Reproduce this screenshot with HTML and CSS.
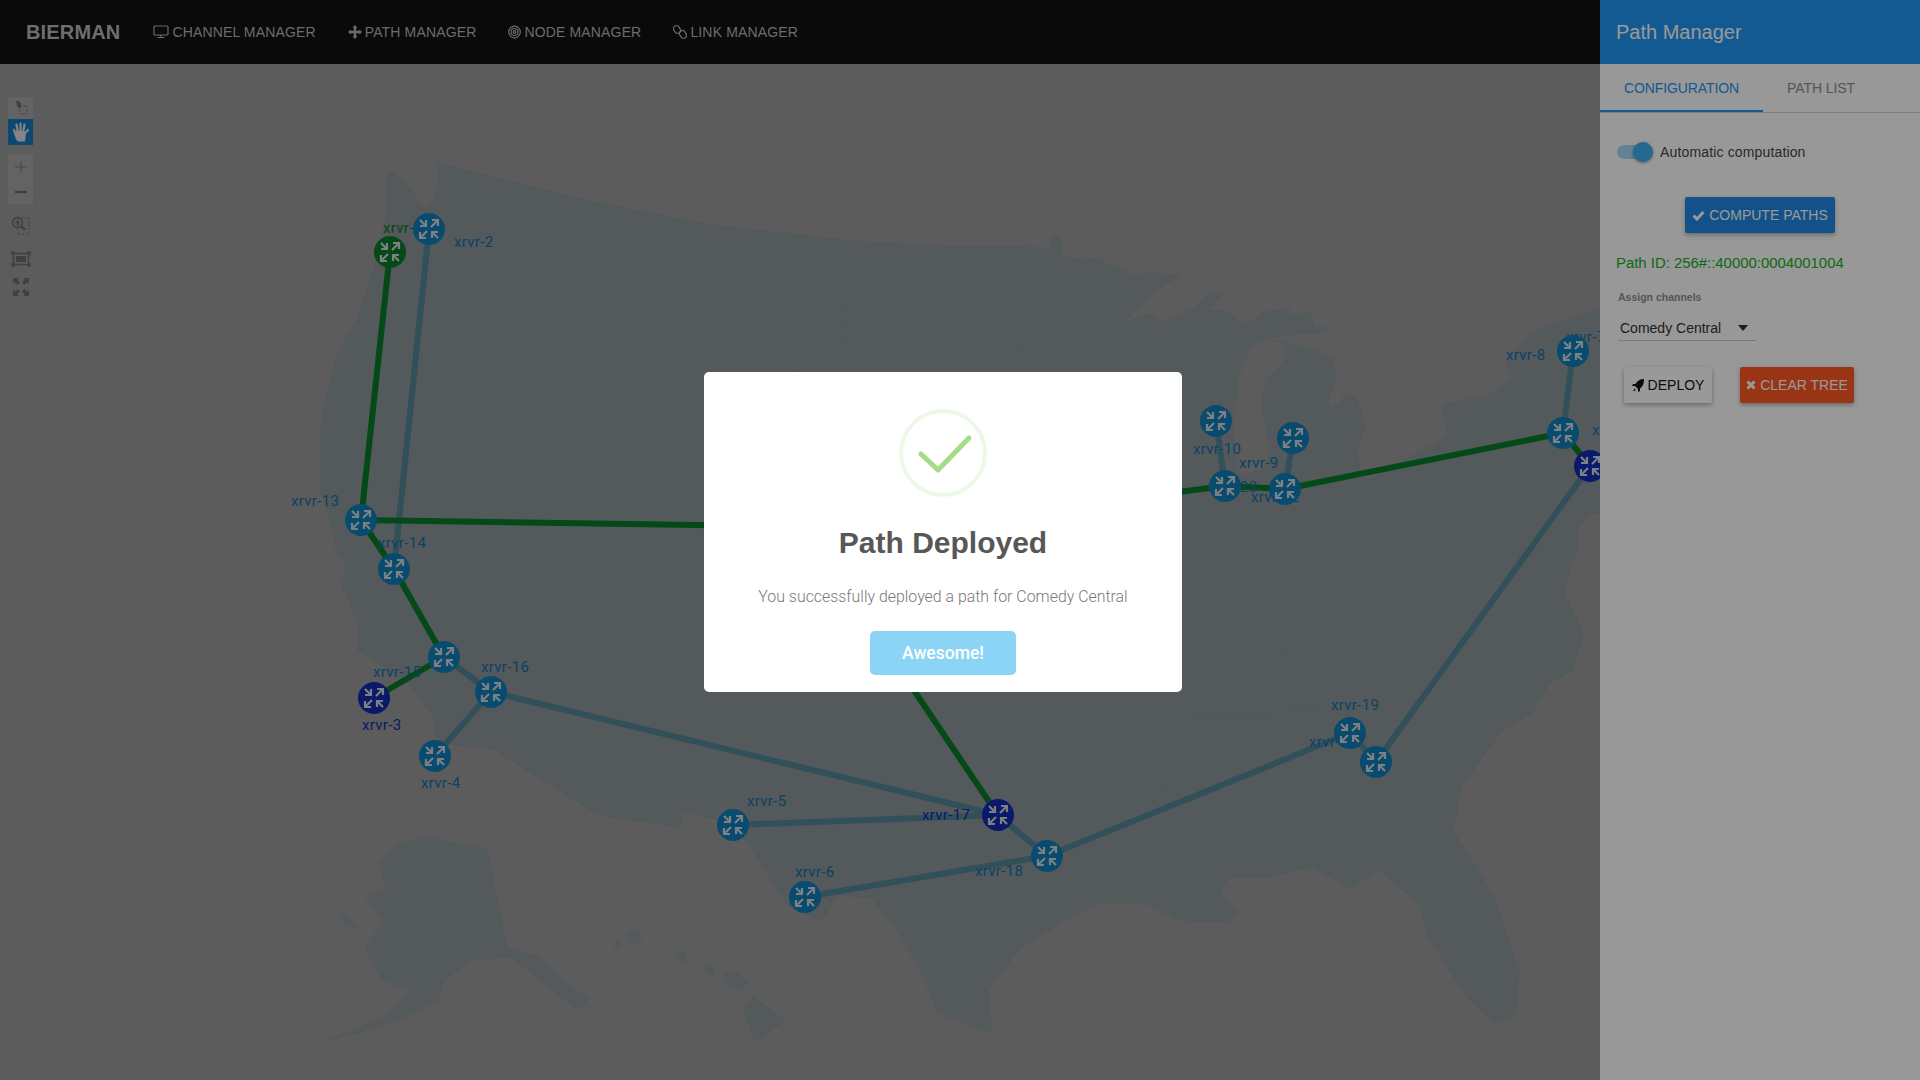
FILE: index.html
```html
<!DOCTYPE html>
<html><head>
<meta charset="utf-8"><title>Bierman</title>
<link rel="stylesheet" href="styles.css">
</head>
<body>
<div id="app">
<div id="main">
<div id="navbar">
<span class="brand">BIERMAN</span>
<a class="navitem"><svg class="navicon" width="16" height="14" viewBox="0 0 16 14"><rect x="1" y="1" width="14" height="9" rx="1"/><path d="M8 10v2M4.500 12.500h7"/></svg>CHANNEL MANAGER</a>
<a class="navitem"><svg class="navicon solid" width="14" height="16" viewBox="0 0 14 14"><path d="M7 0l2.600 2.800H8.200V5.800h3V4.400L14 7l-2.800 2.600V8.200h-3v3h1.400L7 14l-2.600-2.800h1.400v-3h-3v1.400L0 7l2.800-2.600v1.400h3v-3H4.400z"/></svg>PATH MANAGER</a>
<a class="navitem"><svg class="navicon" width="13" height="14" viewBox="0 0 13 14"><circle cx="6.500" cy="7" r="5.800"/><circle cx="6.500" cy="7" r="3.500"/><circle cx="6.500" cy="7" r="1.300"/></svg>NODE MANAGER</a>
<a class="navitem"><svg class="navicon" width="14" height="16" viewBox="0 0 14 16"><rect x="1" y="1.500" width="6" height="8" rx="3" transform="rotate(-30 4 5.500)"/><rect x="7" y="6.500" width="6" height="8" rx="3" transform="rotate(-30 10 10.500)"/></svg>LINK MANAGER</a>
</div>
<div id="map">
<svg id="topology" width="1600" height="1016" viewBox="0 64 1600 1016">
<defs>
<symbol id="router" viewBox="-16 -16 32 32" overflow="visible">
<g class="arrows">
<path d="M-9-9L-3-3M-9-3H-3V-9"/>
<path d="M2-2L9-9M3-9H9V-3"/>
<path d="M-2 2L-9 9M-9 3V9H-3"/>
<path d="M9 9L3 3M3 9V3H9"/>
</g>
</symbol>
</defs>

<g class="land">
<path d="M437 163L584 200L710 225L851 241L956 247L1051 248L1052 235L1059 237L1063 257L1082 260L1096 258L1110 265L1121 270L1135 277L1149 272L1179 276L1153 292L1125 322L1153 313L1160 323L1191 310L1212 292L1223 293L1209 310L1230 313L1237 322L1254 322L1261 313L1289 308L1289 315L1310 313L1314 327L1327 328L1325 333L1300 333L1272 337L1251 345L1238 377L1235 407L1233 447L1240 477L1267 467L1270 447L1262 403L1267 380L1283 363L1287 347L1278 340L1313 350L1333 360L1337 377L1327 403L1333 410L1347 393L1357 400L1365 427L1357 447L1360 477L1370 480L1410 457L1437 443L1447 435L1443 405L1490 395L1510 380L1507 363L1530 333L1567 320L1600 310V513L1590 513L1577 530L1577 547L1563 593L1583 633L1573 670L1550 683L1532 713L1502 730L1461 787L1453 830L1494 897L1519 973L1515 1013L1494 1023L1469 1000L1428 937L1419 903L1378 870L1351 888L1312 867L1270 877L1229 877L1220 890L1237 913L1229 922L1179 920L1146 903L1104 902L1071 917L1021 947L988 990L992 1033L938 1013L922 973L897 930L872 898L839 895L821 921L789 907L748 843L719 820L683 812L681 827L599 815L499 753L503 750L443 743L435 733L433 717L412 687L358 650L360 627L340 580L347 567L337 553L330 520L320 487L320 428L337 355L357 320L380 250L387 213L387 180L390 172L400 178L415 195L425 210L433 200L440 173Z"/>
<path d="M424 837L487 850L507 947L540 957L574 990L590 997L578 1010L540 980L511 957L470 960L445 980L437 1000L391 1023L325 1042L383 1017L412 990L383 980L366 950L383 920L366 897L387 887L379 863L395 847Z"/>
<path d="M752 997L785 1020L756 1042L744 1010Z"/>
<path d="M723 973L736 972L748 983L740 990L726 984Z"/>
<path d="M703 962L712 966L714 975L706 972Z"/>
<path d="M678 950L686 955L683 962L676 958Z"/>
<circle cx="634" cy="937" r="7"/>
<path d="M615 950L618 938L620 948Z"/>
<path d="M340 912L350 918L356 928L346 926Z"/>
</g>
<path class="states" d="M563 195L542 290M584 200L577 237L605 287L595 323L612 320L626 363L668 367L675 355L805 372M851 241L842 343L1018 351M842 343L840 377M1005 248L1012 300L1018 351L1012 370M500 285L542 295L549 310L528 343L521 380M673 690L659 817M839 690L831 817M922 737L963 753L1088 772L1088 857M1088 790H1169L1158 857L1212 855L1212 873M1249 713L1254 857M1191 720L1336 708M1191 720L1166 790M1345 747L1349 840M1278 850L1349 840L1444 845M1075 690L1075 767M1430 530L1553 507M1423 480L1430 530M1313 487L1323 567M1247 500L1253 583L1243 617M1323 567L1353 578L1373 575L1383 587L1403 617L1423 617L1447 605L1460 567L1487 537M1383 580L1400 553L1420 537L1430 530M1213 667L1247 658L1413 640L1568 613M1213 647L1243 617L1283 607L1307 583L1323 567M1193 718L1320 708M1380 703L1413 690L1440 687L1473 693L1517 717M1320 710L1337 777M1407 733L1460 777"/>

<g class="links">
<line x1="429" y1="229" x2="394" y2="569"/>
<line x1="444" y1="657" x2="491" y2="692"/>
<line x1="491" y1="692" x2="435" y2="756"/>
<line x1="491" y1="692" x2="998" y2="815"/>
<line x1="733" y1="825" x2="998" y2="815"/>
<line x1="998" y1="815" x2="1047" y2="856"/>
<line x1="805" y1="897" x2="1047" y2="856"/>
<line x1="1047" y1="856" x2="1350" y2="733"/>
<line x1="1350" y1="733" x2="1376" y2="762"/>
<line x1="1376" y1="762" x2="1590" y2="466"/>
<line x1="1216" y1="421" x2="1225" y2="486"/>
<line x1="1293" y1="438" x2="1285" y2="489"/>
<line x1="1573" y1="351" x2="1563" y2="433"/>
</g>
<g class="links path">
<line x1="390" y1="252" x2="361" y2="520"/>
<line x1="361" y1="520" x2="394" y2="569"/>
<line x1="394" y1="569" x2="444" y2="657"/>
<line x1="444" y1="657" x2="374" y2="698"/>
<line x1="361" y1="520" x2="900" y2="528"/>
<line x1="880" y1="640" x2="998" y2="815"/>
<line x1="1100" y1="502" x2="1225" y2="486"/>
<line x1="1225" y1="486" x2="1285" y2="489"/>
<line x1="1285" y1="489" x2="1563" y2="433"/>
<line x1="1563" y1="433" x2="1590" y2="466"/>
</g>

<g class="labels">
<text class="green" x="383" y="233">xrvr-1</text>
<text x="454" y="247">xrvr-2</text>
<text class="navy" x="362" y="730">xrvr-3</text>
<text x="421" y="788">xrvr-4</text>
<text x="747" y="806">xrvr-5</text>
<text x="795" y="877">xrvr-6</text>
<text x="1566" y="342">xrvr-7</text>
<text x="1506" y="360">xrvr-8</text>
<text x="1239" y="468">xrvr-9</text>
<text x="1193" y="454">xrvr-10</text>
<text x="1251" y="502">xrvr-12</text>
<text x="291" y="506">xrvr-13</text>
<text x="378" y="548">xrvr-14</text>
<text x="373" y="677">xrvr-15</text>
<text x="481" y="672">xrvr-16</text>
<text class="navy" x="922" y="820">xrvr-17</text>
<text x="975" y="876">xrvr-18</text>
<text x="1331" y="710">xrvr-19</text>
<text x="1309" y="747">xrvr-20</text>
<text x="1592" y="435">xrvr-22</text>
<text x="1209" y="492">xrvr-23</text>
</g>

<g class="nodes">
<circle class="green" cx="390" cy="252" r="16"/><use href="#router" x="374" y="236" width="32" height="32"/>
<circle cx="429" cy="229" r="16"/><use href="#router" x="413" y="213" width="32" height="32"/>
<circle cx="361" cy="520" r="16"/><use href="#router" x="345" y="504" width="32" height="32"/>
<circle cx="394" cy="569" r="16"/><use href="#router" x="378" y="553" width="32" height="32"/>
<circle cx="444" cy="657" r="16"/><use href="#router" x="428" y="641" width="32" height="32"/>
<circle cx="491" cy="692" r="16"/><use href="#router" x="475" y="676" width="32" height="32"/>
<circle class="navy" cx="374" cy="698" r="16"/><use href="#router" x="358" y="682" width="32" height="32"/>
<circle cx="435" cy="756" r="16"/><use href="#router" x="419" y="740" width="32" height="32"/>
<circle cx="733" cy="825" r="16"/><use href="#router" x="717" y="809" width="32" height="32"/>
<circle cx="805" cy="897" r="16"/><use href="#router" x="789" y="881" width="32" height="32"/>
<circle class="navy" cx="998" cy="815" r="16"/><use href="#router" x="982" y="799" width="32" height="32"/>
<circle cx="1047" cy="856" r="16"/><use href="#router" x="1031" y="840" width="32" height="32"/>
<circle cx="1350" cy="733" r="16"/><use href="#router" x="1334" y="717" width="32" height="32"/>
<circle cx="1376" cy="762" r="16"/><use href="#router" x="1360" y="746" width="32" height="32"/>
<circle cx="1216" cy="421" r="16"/><use href="#router" x="1200" y="405" width="32" height="32"/>
<circle cx="1293" cy="438" r="16"/><use href="#router" x="1277" y="422" width="32" height="32"/>
<circle cx="1225" cy="486" r="16"/><use href="#router" x="1209" y="470" width="32" height="32"/>
<circle cx="1285" cy="489" r="16"/><use href="#router" x="1269" y="473" width="32" height="32"/>
<circle cx="1563" cy="433" r="16"/><use href="#router" x="1547" y="417" width="32" height="32"/>
<circle cx="1573" cy="351" r="16"/><use href="#router" x="1557" y="335" width="32" height="32"/>
<circle class="navy" cx="1590" cy="466" r="16"/><use href="#router" x="1574" y="450" width="32" height="32"/>
</g>
</svg>

<div id="toolbar">
<div class="toolgroup">
<div class="toolbtn select"><svg width="16" height="16" viewBox="0 0 16 16"><path class="fill" d="M3 1l3 0 2 3 0 2-1 1 0 2-3-3z"/><rect class="dash" x="7" y="6" width="7" height="8"/></svg></div>
<div class="toolbtn hand active"><svg width="18" height="22" viewBox="0 0 18 22"><path d="M5 18L2 9M6 12L4.500 3.500M8.500 11V2.500M11 11.500L12.500 3.500M11.500 13.500L16 9"/><path class="palm" d="M3 10L12 10L14 12L13 20.500H5.500z"/></svg></div>
</div>
<div class="toolgroup zoom">
<div class="toolbtn"><svg width="14" height="14" viewBox="0 0 14 14"><path class="thin" d="M7 1v12M1 7h12"/></svg></div>
<div class="toolbtn"><svg width="14" height="14" viewBox="0 0 14 14"><path class="thick" d="M1 7h12"/></svg></div>
</div>
<div class="toolicon"><svg width="20" height="20" viewBox="0 0 20 20"><circle class="line" cx="6.500" cy="6.500" r="5"/><path class="line" d="M6.500 4v5M4 6.500h5"/><path class="thick" d="M10 10l4 4"/><rect class="dash" x="7" y="2" width="11" height="16"/></svg></div>
<div class="toolicon fit"><svg width="20" height="16" viewBox="0 0 20 16"><rect class="fill" x="5" y="5" width="10" height="6"/><rect class="line" x="2.500" y="2.500" width="15" height="11"/><path class="line" d="M1 4V1h3M16 1h3v3M1 12v3h3M16 15h3v-3"/></svg></div>
<div class="toolicon full"><svg width="18" height="20" viewBox="0 0 18 20"><path class="fill" d="M1 1h6L5.200 2.800 8 5.600 5.600 8 2.800 5.200 1 7zM17 1h-6l1.800 1.800L10 5.600 12.400 8l2.800-2.800L17 7zM1 19h6l-1.800-1.800L8 14.400 5.600 12l-2.800 2.800L1 13zM17 19h-6l1.800-1.800L10 14.400 12.400 12l2.800 2.800L17 13z"/></svg></div>
</div>
</div>
</div>

<div id="panel">
<div class="paneltitle">Path Manager</div>
<div class="tabs">
<div class="tab active">CONFIGURATION</div>
<div class="tab">PATH LIST</div>
</div>
<div class="panelbody">
<div class="togglerow"><span class="toggle"><span class="thumb"></span></span>Automatic computation</div>
<div class="computerow">
<button class="btn primary"><svg class="btnicon" width="13" height="11" viewBox="0 0 13 11"><path d="M1.500 5.500l3.500 3.500 6.500-7" /></svg>COMPUTE PATHS</button>
</div>
<div class="pathid">Path ID: 256#::40000:0004001004</div>
<div class="fieldlabel">Assign channels</div>
<div class="selectbox">Comedy Central<span class="caret"></span></div>
<div class="actions">
<button class="btn plain"><svg width="12" height="13" viewBox="0 0 12 13"><path class="rocket" d="M12 0C8 0 5 2 3.500 5H1L0 7h3l3 3v3l2-1V9.500C10.500 8 12 4.500 12 0zM2.500 9.500L1 12.500 4 11z"/></svg>DEPLOY</button>
<button class="btn danger"><svg class="btnicon" width="10" height="10" viewBox="0 0 10 10"><path d="M1.500 1.500l7 7M8.500 1.500l-7 7"/></svg>CLEAR TREE</button>
</div>
</div>
</div>
</div>

<div id="overlay"></div>
<div id="dialog">
<svg class="okicon" width="88" height="88" viewBox="0 0 88 88">
<circle cx="44" cy="44" r="42" class="ring"/>
<path d="M22 45L39 61L70 29" class="tick"/>
</svg>
<h2>Path Deployed</h2>
<p>You successfully deployed a path for Comedy Central</p>
<button class="confirm">Awesome!</button>
</div>
</body></html>
```
FILE: styles.css
```css
html, body {
margin: 0;
height: 100%;
overflow: hidden;
}
body {
font-family: "Liberation Sans", sans-serif;
background-color: #999;
}
#app {
display: flex;
height: 100vh;
}
#main {
flex: 1;
display: flex;
flex-direction: column;
min-width: 0;
}

/* top bar */
#navbar {
height: 64px;
flex-shrink: 0;
display: flex;
align-items: center;
gap: 32px;
padding-left: 26px;
background-color: #111;
}
.brand {
font-weight: bold;
font-size: 20px;
letter-spacing: 0.150px;
color: #b8b8b8;
margin-right: 1px;
}
.navitem {
display: flex;
align-items: center;
gap: 3px;
font-size: 14px;
letter-spacing: 0.150px;
color: #b4b4b4;
}
.navicon {
fill: none;
stroke: #b4b4b4;
stroke-width: 1.200;
}
.navicon.solid {
fill: #b4b4b4;
stroke: none;
}

/* map */
#map {
flex: 1;
position: relative;
overflow: hidden;
background-color: #999;
}
#topology {
position: absolute;
left: 0;
top: 0;
}
.land path, .land circle {
fill: #8d9499;
stroke: #869499;
stroke-width: 1;
}
.states {
fill: none;
stroke: #86949c;
stroke-width: 1;
}
.links line {
stroke: #528595;
stroke-width: 6;
}
.links.path line {
stroke: #0b7a2a;
}
.labels text {
font-family: Roboto, sans-serif;
font-size: 15px;
letter-spacing: 0.300px;
fill: #126fa8;
}
.labels text.green {
fill: #0b7a2a;
}
.labels text.navy {
fill: #112bb0;
}
.nodes circle {
fill: #0f7db8;
}
.nodes circle.green {
fill: #0b7a2a;
}
.nodes circle.navy {
fill: #112bb0;
}
.arrows path {
fill: none;
stroke: #cfd6da;
stroke-width: 2.200;
}

/* map tools */
#toolbar {
position: absolute;
left: 8px;
top: 33px;
display: flex;
flex-direction: column;
align-items: center;
width: 25px;
}
.toolgroup {
width: 25px;
background-color: #a6a6a6;
}
.toolgroup.zoom {
margin-top: 9px;
}
.toolbtn {
display: flex;
align-items: center;
justify-content: center;
height: 25px;
}
.toolbtn.select {
height: 22px;
}
.toolbtn.hand {
height: 26px;
}
.toolbtn.active {
background-color: #1479be;
}
.toolicon {
display: flex;
justify-content: center;
margin-top: 12px;
}
.toolicon.fit {
margin-top: 15px;
}
.toolicon.full {
margin-top: 10px;
}
.hand path {
fill: none;
stroke: #ddd;
stroke-width: 2.200;
stroke-linecap: round;
}
.hand path.palm {
fill: #ddd;
stroke: none;
}
.fill {
fill: #6b6b6b;
}
.line {
fill: none;
stroke: #6b6b6b;
stroke-width: 1.500;
}
.thin {
fill: none;
stroke: #747474;
stroke-width: 1;
}
.thick {
fill: none;
stroke: #6b6b6b;
stroke-width: 2.500;
}
.dash {
fill: none;
stroke: #6b6b6b;
stroke-width: 1;
stroke-dasharray: 2 1.500;
}

/* right panel */
#panel {
width: 320px;
flex-shrink: 0;
background-color: #fdfdff;
position: relative;
}
.paneltitle {
height: 64px;
line-height: 64px;
padding-left: 16px;
font-size: 20px;
color: #fff;
background-color: #2196f3;
}
.tabs {
display: flex;
height: 49px;
border-bottom: 1px solid #d0d0d0;
box-sizing: border-box;
}
.tab {
font-size: 14px;
letter-spacing: -0.100px;
line-height: 48px;
color: #8e8e8e;
padding: 0 24px;
}
.tab.active {
color: #2196f3;
border-bottom: 2px solid #2196f3;
height: 48px;
box-sizing: border-box;
}
.panelbody {
padding: 0 16px;
}
.togglerow {
display: flex;
align-items: center;
gap: 11px;
height: 24px;
margin-top: 27px;
font-size: 14px;
letter-spacing: 0.150px;
color: #484848;
}
.toggle {
display: block;
position: relative;
width: 32px;
height: 14px;
border-radius: 7px;
margin-left: 1px;
background-color: #a8d8f5;
}
.thumb {
position: absolute;
right: -4px;
top: -3px;
width: 20px;
height: 20px;
border-radius: 50%;
background-color: #3fb0f0;
box-shadow: 0 1px 3px rgba(0,0,0,0.4);
}
.computerow {
display: flex;
justify-content: center;
margin-top: 33px;
}
.btn {
display: flex;
align-items: center;
justify-content: center;
gap: 4px;
height: 36px;
border: none;
border-radius: 2px;
font-family: "Liberation Sans", sans-serif;
font-size: 14px;
padding: 0;
box-shadow: 0 2px 4px rgba(0,0,0,0.3);
}
.btn.primary {
width: 150px;
color: #fff;
background-color: #1e88e5;
}
.btn.plain {
width: 88px;
color: #111;
background-color: #fff;
}
.btn.danger {
width: 114px;
color: #fff;
background-color: #ff5722;
}
.btnicon {
fill: none;
stroke: #fff;
stroke-width: 3;
}
.rocket {
fill: #111;
}
.pathid {
margin-top: 22px;
font-size: 14.900px;
line-height: 16px;
color: #15b020;
}
.fieldlabel {
margin: 19px 0 0 2px;
font-size: 10.500px;
font-weight: bold;
line-height: 14px;
color: #8e8e8e;
}
.selectbox {
position: relative;
width: 138px;
height: 32px;
box-sizing: border-box;
margin: 5px 0 0 2px;
padding: 11px 0 0 2px;
font-size: 14px;
line-height: 16px;
color: #333;
border-bottom: 1px solid #c8c8c8;
}
.caret {
position: absolute;
right: 8px;
top: 16px;
border-left: 5px solid transparent;
border-right: 5px solid transparent;
border-top: 6px solid #333;
}
.actions {
display: flex;
gap: 28px;
margin: 26px 0 0 8px;
}

/* swal dialog */
#overlay {
position: fixed;
left: 0;
top: 0;
right: 0;
bottom: 0;
background-color: rgba(0,0,0,0.4);
}
#dialog {
position: fixed;
left: 704px;
top: 372px;
width: 478px;
height: 320px;
box-sizing: border-box;
padding-top: 37px;
display: flex;
flex-direction: column;
align-items: center;
border-radius: 5px;
background-color: #fff;
}
.okicon {
flex-shrink: 0;
}
.ring {
fill: none;
stroke: #edf8e7;
stroke-width: 4;
}
.tick {
fill: none;
stroke: #a5dc86;
stroke-width: 5;
stroke-linecap: round;
stroke-linejoin: round;
}
#dialog h2 {
margin: 26px 0 0;
font-size: 30px;
line-height: 40px;
font-weight: bold;
color: #575757;
}
#dialog p {
margin: 24px 0 0;
font-family: Roboto, sans-serif;
font-size: 15.900px;
font-weight: 300;
line-height: 20px;
color: #797979;
}
.confirm {
margin-top: 24px;
width: 146px;
height: 44px;
border: none;
border-radius: 5px;
background-color: #8cd4f5;
color: #fff;
font-family: Roboto, sans-serif;
font-size: 17.500px;
font-weight: 500;
}
```
